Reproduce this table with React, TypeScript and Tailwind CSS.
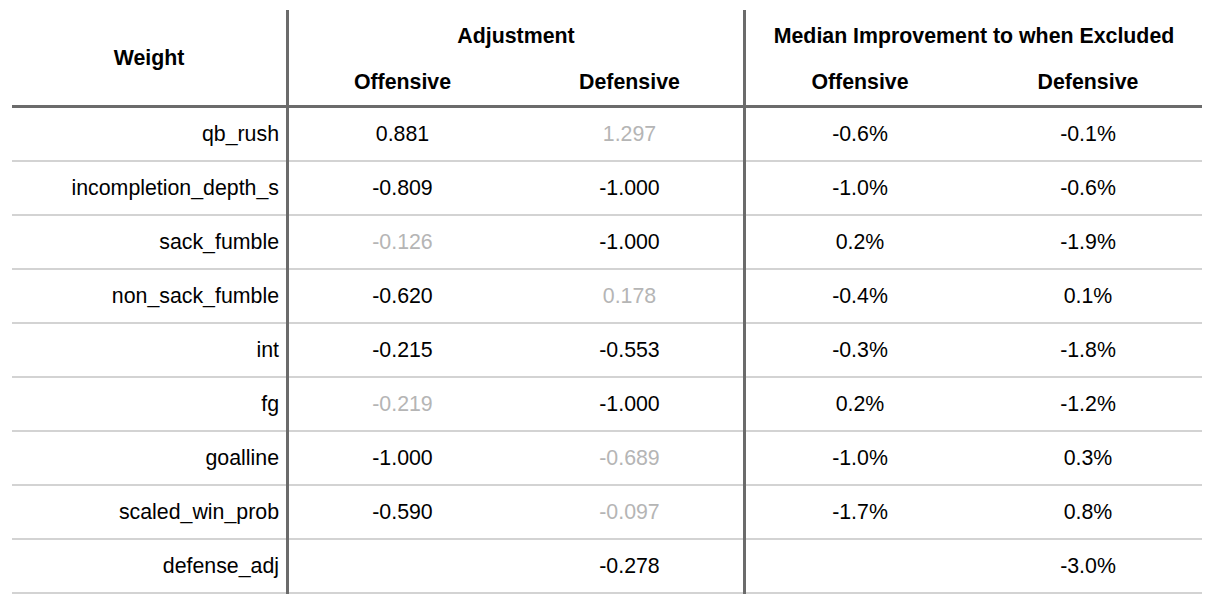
import React from "react";

type Row = {
  name: string;
  adjOff: string;
  adjOffGray?: boolean;
  adjDef: string;
  adjDefGray?: boolean;
  medOff: string;
  medDef: string;
};

const rows: Row[] = [
  { name: "qb_rush", adjOff: "0.881", adjDef: "1.297", adjDefGray: true, medOff: "-0.6%", medDef: "-0.1%" },
  { name: "incompletion_depth_s", adjOff: "-0.809", adjDef: "-1.000", medOff: "-1.0%", medDef: "-0.6%" },
  { name: "sack_fumble", adjOff: "-0.126", adjOffGray: true, adjDef: "-1.000", medOff: "0.2%", medDef: "-1.9%" },
  { name: "non_sack_fumble", adjOff: "-0.620", adjDef: "0.178", adjDefGray: true, medOff: "-0.4%", medDef: "0.1%" },
  { name: "int", adjOff: "-0.215", adjDef: "-0.553", medOff: "-0.3%", medDef: "-1.8%" },
  { name: "fg", adjOff: "-0.219", adjOffGray: true, adjDef: "-1.000", medOff: "0.2%", medDef: "-1.2%" },
  { name: "goalline", adjOff: "-1.000", adjDef: "-0.689", adjDefGray: true, medOff: "-1.0%", medDef: "0.3%" },
  { name: "scaled_win_prob", adjOff: "-0.590", adjDef: "-0.097", adjDefGray: true, medOff: "-1.7%", medDef: "0.8%" },
  { name: "defense_adj", adjOff: "", adjDef: "-0.278", medOff: "", medDef: "-3.0%" },
];

const cellBase = "h-[54px] border-b-2 border-[#d3d3d3] flex items-center pt-[2px]";
const subHead = "row-start-2 flex items-center justify-center pt-[4px] font-bold border-b-[3px] border-[#6b6b6b]";

export default function App() {
  return (
    <div className="w-[1210px] h-[610px] bg-white pt-[10px] pl-[12px]" style={{ fontFamily: '"Liberation Sans", Arial, sans-serif' }}>
      <div className="grid grid-cols-[274px_3px_227px_227px_3px_228px_228px] grid-rows-[47px_51px_repeat(9,54px)] text-[21.33px] text-black">
        {/* vertical rules */}
        <div className="col-start-2 row-start-1 row-span-11 bg-[#6b6b6b]" />
        <div className="col-start-5 row-start-1 row-span-11 bg-[#6b6b6b]" />

        {/* header */}
        <div className="col-start-1 row-start-1 row-span-2 flex items-center justify-center pt-[2px] font-bold border-b-[3px] border-[#6b6b6b]">
          Weight
        </div>
        <div className="col-start-3 col-span-2 row-start-1 flex items-center justify-center pt-[6px] font-bold">
          Adjustment
        </div>
        <div className="col-start-6 col-span-2 row-start-1 flex items-center justify-center pt-[6px] font-bold">
          Median Improvement to when Excluded
        </div>
        <div className={`col-start-3 ${subHead}`}>Offensive</div>
        <div className={`col-start-4 ${subHead}`}>Defensive</div>
        <div className={`col-start-6 ${subHead}`}>Offensive</div>
        <div className={`col-start-7 ${subHead}`}>Defensive</div>

        {/* body */}
        {rows.map((r) => (
          <React.Fragment key={r.name}>
            <div className={`col-start-1 ${cellBase} justify-end pr-[7px]`}>{r.name}</div>
            <div className={`col-start-3 ${cellBase} justify-center ${r.adjOffGray ? "text-[#b5b5b5]" : ""}`}>{r.adjOff}</div>
            <div className={`col-start-4 ${cellBase} justify-center ${r.adjDefGray ? "text-[#b5b5b5]" : ""}`}>{r.adjDef}</div>
            <div className={`col-start-6 ${cellBase} justify-center`}>{r.medOff}</div>
            <div className={`col-start-7 ${cellBase} justify-center`}>{r.medDef}</div>
          </React.Fragment>
        ))}
      </div>
    </div>
  );
}
